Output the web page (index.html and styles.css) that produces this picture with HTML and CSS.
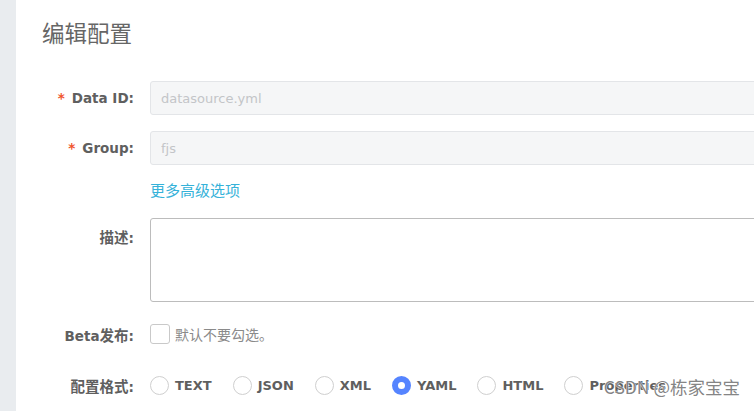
FILE: index.html
```html
<!DOCTYPE html>
<html lang="zh-CN">
<head>
<meta charset="utf-8">
<title>编辑配置</title>
<link rel="stylesheet" href="styles.css">
</head>
<body>
<div class="page">
  <aside class="sidebar"></aside>
  <main class="main">
    <h1 class="title">编辑配置</h1>
    <form class="form">
      <div class="row row-input">
        <label class="label"><span class="req">*</span>Data ID:</label>
        <input class="field" type="text" value="datasource.yml" disabled>
      </div>
      <div class="row row-input row-group">
        <label class="label"><span class="req">*</span>Group:</label>
        <input class="field" type="text" value="fjs" disabled>
      </div>
      <div class="row row-link">
        <span class="label"></span>
        <a class="more" href="#">更多高级选项</a>
      </div>
      <div class="row row-desc">
        <label class="label label-top"><span class="zh">描述</span>:</label>
        <textarea class="area"></textarea>
      </div>
      <div class="row row-beta">
        <label class="label">Beta<span class="zh">发布</span>:</label>
        <span class="checkbox"></span>
        <span class="hint">默认不要勾选。</span>
      </div>
      <div class="row row-type">
        <label class="label"><span class="zh">配置格式</span>:</label>
        <div class="radios">
          <span class="radio"><span class="dot"></span>TEXT</span>
          <span class="radio"><span class="dot"></span>JSON</span>
          <span class="radio"><span class="dot"></span>XML</span>
          <span class="radio"><span class="dot on"></span>YAML</span>
          <span class="radio"><span class="dot"></span>HTML</span>
          <span class="radio"><span class="dot"></span>Properties</span>
        </div>
      </div>
    </form>
  </main>
</div>
<div class="watermark">CSDN @栋家宝宝</div>
</body>
</html>
```

FILE: styles.css
```css
html, body {
  margin: 0;
  padding: 0;
  height: 100%;
  overflow: hidden;
  background: #ffffff;
  font-family: "DejaVu Sans", "Noto Sans CJK SC", sans-serif;
  font-size: 13px;
  color: #666666;
}

.page {
  display: flex;
  height: 100%;
}

.sidebar {
  width: 16px;
  flex: none;
  background: #e9ecef;
}

.main {
  flex: 1;
  padding-left: 26px;
  min-width: 0;
}

.title {
  margin: 17px 0 0;
  font-family: "Noto Sans CJK SC", sans-serif;
  font-size: 22.5px;
  font-weight: 400;
  line-height: 30px;
  color: #666666;
}

.form {
  margin-top: 34px;
}

.row {
  display: flex;
  align-items: center;
}

.label {
  width: 92px;
  flex: none;
  margin-right: 16px;
  text-align: right;
  font-size: 13.5px;
  font-weight: bold;
  color: #5f5f5f;
  white-space: nowrap;
}

.label .zh {
  font-family: "Noto Sans CJK SC", sans-serif;
  font-size: 14.5px;
}

.req {
  color: #f0542c;
  margin-right: 7px;
  font-weight: bold;
}

.field {
  box-sizing: border-box;
  width: 640px;
  height: 34px;
  flex: none;
  margin: 0;
  padding: 0 10px;
  border: 1px solid #e3e5e8;
  border-radius: 3px;
  background: #f5f6f7;
  font-family: "DejaVu Sans", sans-serif;
  font-size: 13px;
  color: #c3c5c8;
  -webkit-text-fill-color: #c3c5c8;
  outline: none;
}

.row-group {
  margin-top: 16px;
}

.row-link {
  margin-top: 15px;
  height: 20px;
}

.more {
  font-family: "Noto Sans CJK SC", sans-serif;
  font-size: 15px;
  line-height: 20px;
  color: #35b2d9;
  text-decoration: none;
}

.row-desc {
  margin-top: 18px;
  align-items: flex-start;
}

.label-top {
  padding-top: 9px;
  line-height: 20px;
}

.area {
  box-sizing: border-box;
  width: 640px;
  height: 84px;
  flex: none;
  margin: 0;
  border: 1px solid #bcbcbc;
  border-radius: 3px;
  background: #ffffff;
  resize: none;
  outline: none;
}

.row-beta {
  margin-top: 22px;
  height: 20px;
}

.checkbox {
  box-sizing: border-box;
  width: 20px;
  height: 20px;
  flex: none;
  border: 1px solid #c9c9c9;
  border-radius: 3px;
  background: #ffffff;
}

.hint {
  margin-left: 5px;
  font-family: "Noto Sans CJK SC", sans-serif;
  font-size: 14px;
  color: #8a8a8a;
}

.row-type {
  margin-top: 31px;
  height: 20px;
}

.radios {
  display: flex;
  align-items: center;
  white-space: nowrap;
}

.radio {
  display: inline-flex;
  align-items: center;
  gap: 6px;
  margin-right: 21px;
  font-weight: bold;
  color: #5f5f5f;
}

.dot {
  box-sizing: border-box;
  width: 19px;
  height: 19px;
  flex: none;
  border: 1px solid #cfcfcf;
  border-radius: 50%;
  background: #ffffff;
}

.dot.on {
  border: 6.5px solid #5584ff;
  background: #ffffff;
}

.watermark {
  position: absolute;
  right: 14px;
  bottom: 13px;
  font-family: "Noto Sans CJK SC", sans-serif;
  font-size: 17.5px;
  line-height: 22px;
  color: rgba(100, 100, 100, 0.8);
  text-shadow: 0 0 1px #ffffff, 0 0 1px #ffffff;
  white-space: nowrap;
}
```
